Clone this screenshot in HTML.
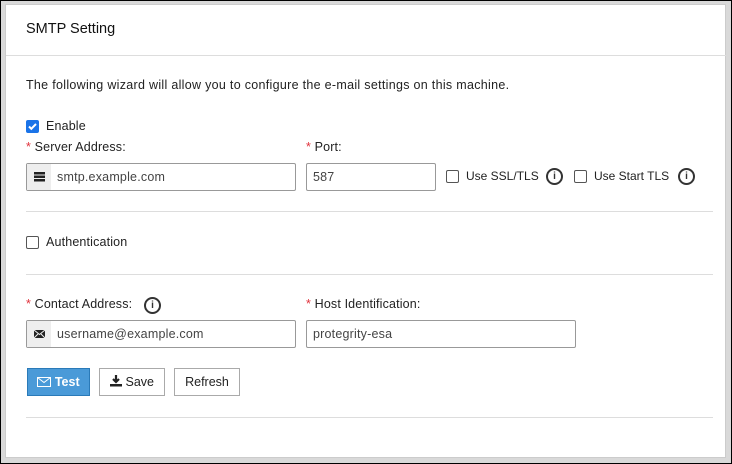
<!DOCTYPE html>
<html><head><style>
*{box-sizing:border-box;margin:0;padding:0}
body{width:732px;height:464px;background:#000;position:relative;font-family:"Liberation Sans",sans-serif;font-size:12px;color:#333;overflow:hidden}
.frame{position:absolute;left:1px;top:1px;width:730px;height:462px;background:#d9d9d9}
.panel{position:absolute;left:5px;top:4px;width:721px;height:454px;background:#fff;border:1px solid #ccc}
.a{position:absolute;white-space:nowrap}
.hr{position:absolute;height:1px;background:#ddd}
.inp{position:absolute;height:28px;border:1px solid #999;border-radius:2px;background:#fff;font-size:12.5px;color:#444;line-height:26px;padding-left:6px;letter-spacing:0.2px}
.addon{position:absolute;left:0;top:0;width:24px;height:26px;background:#eee}
.req{color:#e0303a}
.lbl{font-size:12.5px;color:#222;letter-spacing:0.15px}
.cb{position:absolute;width:13px;height:13px;border:1px solid #555;border-radius:2px;background:#fff}
.info{position:absolute;width:17px;height:17px;border:2px solid #333;border-radius:50%;font:bold 10px/13px "Liberation Sans";text-align:center;color:#333}
.btn{position:absolute;height:28px;border:1px solid #aaa;background:#fff;font-size:12.5px;color:#222;line-height:26px;text-align:center}
</style></head><body>
<div class="frame"></div>
<div class="panel"></div>
<div class="a" style="left:26px;top:21px;font-size:14.5px;color:#111">SMTP Setting</div>
<div class="hr" style="left:6px;top:55px;width:720px"></div>
<div class="a lbl" style="left:26px;top:78px;letter-spacing:0.3px">The following wizard will allow you to configure the e-mail settings on this machine.</div>
<div class="cb" style="left:26px;top:120px;background:#1a73e8;border-color:#1a73e8"><svg width="11" height="11" viewBox="0 0 11 11" style="position:absolute;left:0;top:0"><path d="M2 5.5l2.3 2.3L9 3" stroke="#fff" stroke-width="2" fill="none"/></svg></div>
<div class="a lbl" style="left:46px;top:119px">Enable</div>
<div class="a lbl" style="left:26px;top:140px"><span class="req">*</span> Server Address:</div>
<div class="a lbl" style="left:306px;top:140px"><span class="req">*</span> Port:</div>
<div class="inp" style="left:26px;top:163px;width:270px;padding-left:30px"><div class="addon"><svg width="24" height="26"><rect x="7" y="8" width="11" height="2.5" fill="#222"/><rect x="7" y="11.5" width="11" height="2.5" fill="#222"/><rect x="7" y="15" width="11" height="2.5" fill="#222"/></svg></div>smtp.example.com</div>
<div class="inp" style="left:306px;top:163px;width:130px">587</div>
<div class="cb" style="left:446px;top:170px"></div>
<div class="a lbl" style="left:466px;top:169px;font-size:12px;letter-spacing:0">Use SSL/TLS</div>
<div class="info" style="left:546px;top:168px">i</div>
<div class="cb" style="left:574px;top:170px"></div>
<div class="a lbl" style="left:594px;top:169px;font-size:12px;letter-spacing:0">Use Start TLS</div>
<div class="info" style="left:678px;top:168px">i</div>
<div class="hr" style="left:26px;top:211px;width:687px"></div>
<div class="cb" style="left:26px;top:236px"></div>
<div class="a lbl" style="left:46px;top:235px">Authentication</div>
<div class="hr" style="left:26px;top:274px;width:687px"></div>
<div class="a lbl" style="left:26px;top:297px"><span class="req">*</span> Contact Address:</div>
<div class="info" style="left:144px;top:297px">i</div>
<div class="a lbl" style="left:306px;top:297px"><span class="req">*</span> Host Identification:</div>
<div class="inp" style="left:26px;top:320px;width:270px;padding-left:30px"><div class="addon"><svg width="24" height="26"><rect x="7" y="9" width="11" height="8" fill="#222"/><path d="M7 9l5.5 4.5L18 9M7 17l4-4M18 17l-4-4" stroke="#eee" stroke-width="1" fill="none"/></svg></div>username@example.com</div>
<div class="inp" style="left:306px;top:320px;width:270px">protegrity-esa</div>
<div class="btn" style="left:27px;top:368px;width:63px;background:#4a9ad8;border-color:#2a7ab8;color:#fff;font-weight:bold"><svg width="14" height="10" style="vertical-align:-1px"><rect x="0.5" y="0.5" width="13" height="9" fill="none" stroke="#fff"/><path d="M0.5 0.5l6.5 5 6.5-5" stroke="#fff" fill="none"/></svg> Test</div>
<div class="btn" style="left:99px;top:368px;width:66px"><svg width="12" height="12" style="vertical-align:-1px"><path d="M6 0v7M3 4l3 3 3-3" stroke="#222" stroke-width="2.2" fill="none"/><rect x="0" y="9" width="12" height="2.5" fill="#222"/></svg> Save</div>
<div class="btn" style="left:174px;top:368px;width:66px">Refresh</div>
<div class="hr" style="left:26px;top:417px;width:687px"></div>
</body></html>
